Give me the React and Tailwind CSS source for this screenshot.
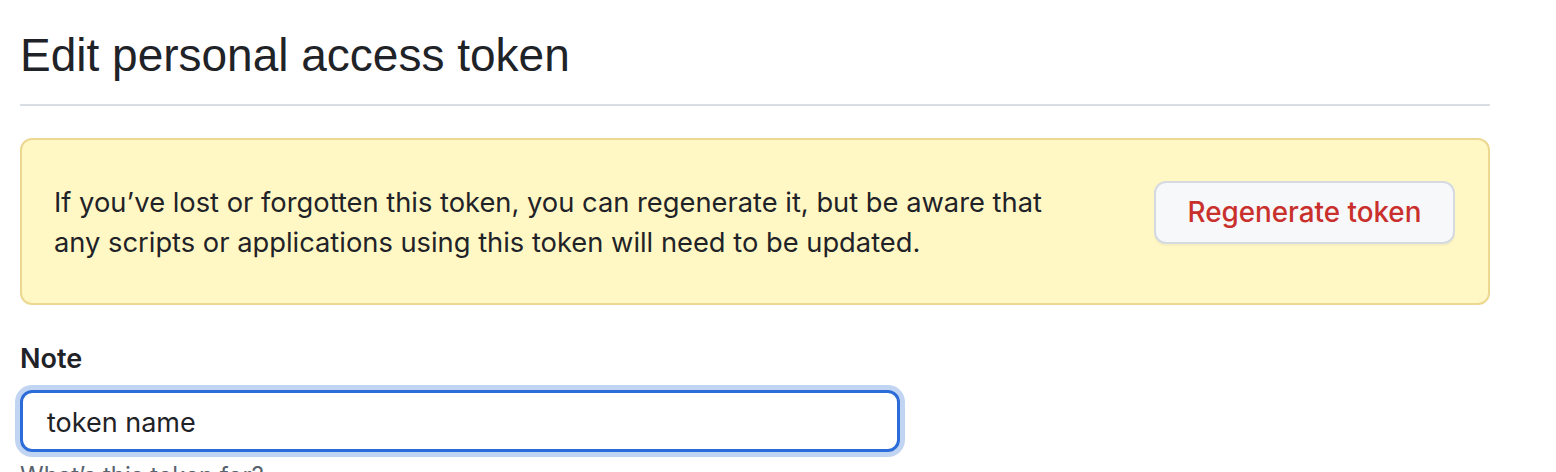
import React from "react";

const FONT = { fontFamily: "Inter, 'Liberation Sans', sans-serif" };
const HEAD = { fontFamily: "'Liberation Sans', Arial, sans-serif" };

export default function App() {
  return (
    <div className="bg-white min-h-[472px] text-[#1f2328]" style={FONT}>
      <div className="w-[1470px] ml-[20px] pt-[24px]">
        <h1
          className="text-[46px] leading-[62px] font-normal pb-[18px] border-b-2 border-[#d8dee4]"
          style={HEAD}
        >
          Edit personal access token
        </h1>

        <div className="mt-[32px] flex items-start justify-between rounded-[12px] border-2 border-[#ecd890] bg-[#fff8c5] pl-[32px] pr-[33px] h-[167px]">
          <p className="mt-[43px] text-[27.3px] leading-[40px] w-[1010px]">
            If you’ve lost or forgotten this token, you can regenerate it, but be aware that
            any scripts or applications using this token will need to be updated.
          </p>
          <button className="mt-[41px] h-[63px] w-[301px] rounded-[12px] border-2 border-[#d5d9e0] bg-[#f6f8fa] text-[#c9302c] text-[27.8px] font-medium shadow-[0_2px_0_rgba(31,35,40,0.04)]">
            Regenerate token
          </button>
        </div>

        <div className="mt-[34px]">
          <label className="block text-[27px] font-semibold leading-[40px]">Note</label>
          <div className="mt-[11px] w-[880px] h-[62px] rounded-[12px] border-[3px] border-[#2b6cd9] ring-[5px] ring-[#c1d5f2] flex items-center px-[24px] pt-[4px] text-[27px]">
            token name
          </div>
          <p className="mt-[6px] text-[24px] leading-[36px] text-[#59636e]">What’s this token for?</p>
        </div>
      </div>
    </div>
  );
}
